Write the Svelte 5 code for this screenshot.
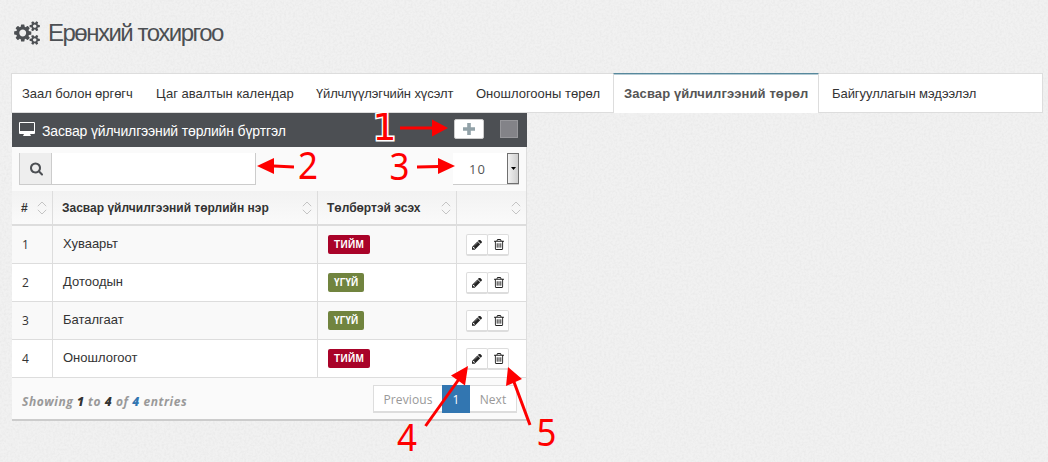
<script>
  const tabs = [
    { label: 'Заал болон өргөгч', w: 134, ls: -0.05 },
    { label: 'Цаг авалтын календар', w: 160, ls: 0 },
    { label: 'Үйлчлүүлэгчийн хүсэлт', w: 160, ls: -0.12 },
    { label: 'Оношлогооны төрөл', w: 147, ls: 0 },
    { label: 'Засвар үйлчилгээний төрөл', w: 206, ls: 0.1, active: true },
    { label: 'Байгууллагын мэдээлэл', w: 170, ls: -0.05 }
  ];
  const rows = [
    { id: 1, name: 'Хуваарьт', paid: true },
    { id: 2, name: 'Дотоодын', paid: false },
    { id: 3, name: 'Баталгаат', paid: false },
    { id: 4, name: 'Оношлогоот', paid: true }
  ];
  const smallCog =
    'M1920 1338v140q0 16-149 31-12 27-30 52 51 113 51 138 0 4-4 7-122 71-124 71-8 0-46-47t-52-68q-20 2-30 2t-30-2q-14 21-52 68t-46 47q-2 0-124-71-4-3-4-7 0-25 51-138-18-25-30-52-149-15-149-31v-140q0-16 149-31 13-29 30-52-51-113-51-138 0-4 4-7 4-2 35-20t59-34 30-16q8 0 46 46.5t52 67.5q20-2 30-2t30 2q51-71 92-112l6-2q4 0 124 70 4 3 4 7 0 25-51 138 17 23 30 52 149 15 149 31zM1664 1408q0-52-38-90t-90-38-90 38-38 90q0 53 37.5 90.5t90.5 37.5 90.5-37.5 37.5-90.5z';
</script>

{#snippet sorter()}
  <svg class="sort" width="10" height="14" viewBox="0 0 10 14"><path d="M.8 5.2 5 1l4.2 4.2M.8 8.8 5 13l4.2-4.2" /></svg>
{/snippet}

<div class="page">
  <svg class="grain" width="1048" height="462" aria-hidden="true">
    <filter id="grain">
      <feTurbulence type="fractalNoise" baseFrequency="0.45" numOctaves="2" seed="4" />
      <feColorMatrix values="0 0 0 0 0  0 0 0 0 0  0 0 0 0 0  .06 0 0 0 -.022" />
    </filter>
    <rect width="1048" height="462" filter="url(#grain)" />
  </svg>

  <h1>
    <svg width="26" height="24" viewBox="0 0 1920 1792">
      <path d="M896 896q0-106-75-181t-181-75-181 75-75 181 75 181 181 75 181-75 75-181zM1280 805v185q0 10-7 19.5t-16 10.5l-155 24q-11 35-32 76 34 48 90 115 7 11 7 20 0 12-7 19-23 30-82.5 89.5t-78.5 59.5q-11 0-21-7l-115-90q-37 19-77 31-11 108-23 155-7 24-30 24h-186q-11 0-20-7.5t-10-17.5l-23-153q-34-10-75-31l-118 89q-7 7-20 7-11 0-21-8-144-133-144-160 0-9 7-19 10-14 41-53t47-61q-23-44-35-82l-152-24q-10-1-17-9.5t-7-19.5v-185q0-10 7-19.5t16-10.5l155-24q11-35 32-76-34-48-90-115-7-11-7-20 0-12 7-20 22-30 82-89t79-59q11 0 21 7l115 90q34-18 77-32 11-108 23-154 7-24 30-24h186q11 0 20 7.5t10 17.5l23 153q34 10 75 31l118-89q8-7 20-7 11 0 21 8 144 133 144 160 0 8-7 19-12 16-42 54t-45 60q23 48 34 82l152 23q10 2 17 10.5t7 19.5z" fill-rule="evenodd" />
      <path d={smallCog} fill-rule="evenodd" />
      <path d={smallCog} fill-rule="evenodd" transform="translate(0 -1024)" />
    </svg>
    <span>Ерөнхий тохиргоо</span>
  </h1>

  <nav>
    {#each tabs as tab}
      <a class:active={tab.active} style="width:{tab.w}px;letter-spacing:{tab.ls}px">{tab.label}</a>
    {/each}
  </nav>

  <section>
    <header>
      <svg class="desktop" width="16" height="14" viewBox="0 0 16 14"><path d="M1 0h14q1 0 1 1v10q0 1-1 1h-4l1 2H4l1-2H1q-1 0-1-1V1q0-1 1-1zM1 1v8h14V1z" fill-rule="evenodd" /></svg>
      <span class="title">Засвар үйлчилгээний төрлийн бүртгэл</span>
      <div class="tool"><button class="add" aria-label="+"><svg width="12" height="12"><path d="M4.2 0h3.6v4.2H12v3.6H7.8V12H4.2V7.8H0V4.2h4.2z" /></svg></button></div>
      <i class="swatch"></i>
    </header>

    <div class="filters">
      <div class="search">
        <span><svg width="13" height="14" viewBox="64 128 1664 1664"><path fill-rule="evenodd" d="M1216 832q0-185-131.5-316.5t-316.5-131.5-316.5 131.5-131.5 316.5 131.5 316.5 316.5 131.5 316.5-131.5 131.5-316.5zm512 832q0 52-38 90t-90 38q-54 0-90-38l-343-342q-179 124-399 124-143 0-273.5-55.5t-225-150-150-225-55.5-273.5 55.5-273.5 150-225 225-150 273.5-55.5 273.5 55.5 225 150 150 225 55.5 273.5q0 220-124 399l343 343q37 37 37 90z" /></svg></span>
        <input type="text" />
      </div>
      <div class="length"><span>10</span><b><svg width="5" height="3"><path d="M0 0h5L2.5 3z" /></svg></b></div>
    </div>

    <div class="row head">
      <div>#{@render sorter()}</div>
      <div><span>Засвар үйлчилгээний төрлийн нэр</span>{@render sorter()}</div>
      <div><span>Төлбөртэй эсэх</span>{@render sorter()}</div>
      <div>{@render sorter()}</div>
    </div>
    {#each rows as row}
      <div class="row" class:odd={row.id % 2 === 1}>
        <div class="num">{row.id}</div>
        <div class="name">{row.name}</div>
        <div><span class="label" class:yes={row.paid}>{row.paid ? 'ТИЙМ' : 'ҮГҮЙ'}</span></div>
        <div class="actions">
          <button aria-label={row.name}><svg width="10" height="10" viewBox="128 200 1520 1520"><path fill-rule="evenodd" d="M491 1536l91-91-235-235-91 91v107h128v128h107zm523-928q0-22-22-22-10 0-17 7l-542 542q-7 7-7 17 0 22 22 22 10 0 17-7l542-542q7-7 7-17zm-54-192l416 416-832 832h-416v-416zm683 96q0 53-37 90l-166 166-416-416 166-165q36-38 90-38 53 0 91 38l235 234q37 39 37 91z" /></svg></button>
          <button aria-label={row.name}><svg width="10" height="11" viewBox="192 128 1408 1536"><path fill-rule="evenodd" d="M704 736v576q0 14-9 23t-23 9h-64q-14 0-23-9t-9-23v-576q0-14 9-23t23-9h64q14 0 23 9t9 23zm256 0v576q0 14-9 23t-23 9h-64q-14 0-23-9t-9-23v-576q0-14 9-23t23-9h64q14 0 23 9t9 23zm256 0v576q0 14-9 23t-23 9h-64q-14 0-23-9t-9-23v-576q0-14 9-23t23-9h64q14 0 23 9t9 23zm128 724v-948h-896v948q0 22 7 40.5t14.5 27 10.5 8.5h832q3 0 10.5-8.5t14.5-27 7-40.5zm-672-1076h448l-48-117q-7-9-17-11h-317q-10 2-17 11zm928 32v64q0 14-9 23t-23 9h-96v948q0 83-47 143.5t-113 60.5h-832q-66 0-113-58.5t-47-141.5v-952h-96q-14 0-23-9t-9-23v-64q0-14 9-23t23-9h309l70-167q15-37 54-63t79-26h320q40 0 79 26t54 63l70 167h309q14 0 23 9t9 23z" /></svg></button>
        </div>
      </div>
    {/each}

    <footer>
      <p>Showing <b>1</b> to <b>4</b> of <b class="total">4</b> entries</p>
      <div class="pager"><a class="prev">Previous</a><a class="current">1</a><a class="next">Next</a></div>
    </footer>
  </section>

  <svg class="marks" width="1048" height="462">
    <g stroke="#fe0000" stroke-width="3">
      <path d="M400 128h32M294 167l-20-1M417 167l22-.5M425.500 426l35-49M530 425l-16-43" />
    </g>
    <g fill="#fe0000">
      <path d="M448 128l-16-8.500v17zM257 166l17-8v16zM455 166l-17-8v16zM468 366l-17 9.500 14 10zM508 367l-2 19 16-7z" />
      <text x="372.500" y="140" class="outlined" textLength="24" lengthAdjust="spacingAndGlyphs">1</text>
      <text x="298" y="179" textLength="20" lengthAdjust="spacingAndGlyphs">2</text>
      <text x="389.500" y="180" textLength="20" lengthAdjust="spacingAndGlyphs">3</text>
      <text x="397" y="451" textLength="20" lengthAdjust="spacingAndGlyphs">4</text>
      <text x="536.500" y="446" textLength="20" lengthAdjust="spacingAndGlyphs">5</text>
    </g>
  </svg>
</div>

<style>
  :global(body) { margin: 0; background: #f0f0f0; }
  .page, .page * { box-sizing: border-box; }
  .page { position: relative; width: 1048px; height: 462px; overflow: hidden; padding: 14px 5px 0 11px; background: #f1f1f1; font: 13px "Liberation Sans", Arial, sans-serif; color: #333; }
  .grain { position: absolute; inset: 0; }
  h1 { position: relative; display: flex; align-items: center; height: 38px; margin: 0 0 21px; padding-left: 3px; font-size: 24px; font-weight: 400; letter-spacing: -1.5px; color: #4c4f53; }
  h1 svg { margin-right: 8px; fill: #4c4f53; }
  nav { position: relative; display: flex; height: 40px; border: 1px solid #ddd; background: #fff; }
  nav a { padding-left: 10px; line-height: 39px; height: 38px; white-space: nowrap; color: #333; }
  nav a.active { height: 40px; margin-top: -1px; line-height: 39px; border: solid #ddd; border-width: 1px 1px 0; border-top-color: #57889c; box-shadow: inset 0 1px #b5cbd4; font-weight: 700; color: #555; background: #fff; }
  nav a:last-child { padding-left: 13px; }
  section { position: relative; width: 515px; margin-left: 1px; border-right: 1px solid #ddd; background: #fafafa; }
  header { display: flex; width: 515px; height: 34px; padding-left: 8px; background: #4c4f53; color: #fff; }
  .desktop { margin: 9px 7px 0 -1px; fill: #fff; }
  .title { flex: none; width: 391px; line-height: 36px; font-size: 14px; letter-spacing: -.14px; white-space: nowrap; }
  .tool { width: 46px; padding-top: 6px; margin-left: 21px; }
  .add { display: grid; place-items: center; width: 30px; height: 20px; padding: 0; border: 1px solid #ccc; border-radius: 2px; background: #fff; }
  .add svg { fill: #92a2a8; }
  .swatch { width: 18px; height: 18px; flex: none; margin-top: 7px; background: #838388; border: 1px solid #97979b; }
  .filters { display: flex; justify-content: space-between; height: 44px; padding: 6px 7px 0; }
  .search { display: flex; height: 32px; }
  .search span { width: 33px; display: grid; place-items: center; padding-left: 2px; border: solid #ccc; border-width: 0 1px 1px; background: #eee; }
  .search svg { fill: #4c4f53; }
  input { width: 204px; height: 32px; padding: 0; border: solid #ccc; border-width: 0 1px 1px 0; background: #fff; outline: 0; }
  .length { display: flex; justify-content: space-between; width: 66px; height: 32px; background: #fff; border-bottom: 1px solid #ccc; font: 13px/33px "Open Sans", sans-serif; letter-spacing: 1px; color: #555; padding-left: 16px; }
  .length b { display: grid; place-items: center; width: 12px; height: 31px; border: 1px solid #707070; background: linear-gradient(90deg, #f1f1f1, #cfcfcf); }
  .row { display: grid; grid-template-columns: 41px 265px 139px 69px; height: 38px; background: #fff; }
  .row.odd { background: #f9f9f9; }
  .row.head { height: 35px; border-bottom: 2px solid #ddd; background: linear-gradient(#f2f2f2, #fafafa); font-size: 12px; font-weight: 700; }
  .row > div { display: flex; align-items: center; padding-left: 10px; border-right: 1px solid #ddd; border-bottom: 1px solid #ddd; white-space: nowrap; }
  .row > div:last-child { border-right: 0; }
  .row.head > div { border-bottom: 0; padding-left: 9px; }
  .sort { margin-left: auto; margin-right: 5px; fill: none; stroke: #c4c4c4; }
  .num { font-family: "Open Sans", sans-serif; font-size: 12px; padding-bottom: 1px; }
  .row > .name { font-size: 13px; padding-bottom: 2px; }
  .label { height: 19px; padding: 0 6px; border-radius: 2px; background: #71843f; color: #fff; font: 700 10px/20px "Liberation Sans", sans-serif; letter-spacing: .1px; }
  .label.yes { background: #a90329; letter-spacing: .3px; }
  .row > .actions { padding-left: 9px; }
  .actions button { display: grid; place-items: center; width: 22px; height: 22px; padding: 1px 0 0; border: 1px solid #ddd; border-bottom-width: 2px; border-radius: 2px; background: #fff; }
  .actions button + button { margin-left: -1px; padding-left: 1px; }
  .actions svg { fill: #222; }
  footer { display: flex; justify-content: space-between; width: 515px; height: 43px; padding: 7px 10px 0; border-bottom: 2px solid #ccc; font: 12px "Open Sans", sans-serif; }
  p { margin: 0; line-height: 33px; font-weight: 700; font-style: italic; letter-spacing: .55px; color: #999; white-space: nowrap; }
  p b { color: #333; }
  p .total { color: #3276b1; }
  .pager { display: flex; height: 28px; text-align: center; color: #999; letter-spacing: .1px; }
  .pager a { border: 1px solid #ddd; border-bottom-width: 2px; background: #fff; line-height: 28px; }
  .pager .prev { width: 69px; border-right: 0; }
  .pager .current { width: 28px; border-color: #3276b1; background: #3276b1; color: #fff; }
  .pager .next { width: 47px; border-left: 0; }
  .marks { position: absolute; inset: 0; pointer-events: none; }
  .marks text { font: 38px "Noto Sans", sans-serif; }
  .marks .outlined { font: 38px "DejaVu Sans", sans-serif; stroke: #fff; stroke-width: 3px; paint-order: stroke; }
</style>
